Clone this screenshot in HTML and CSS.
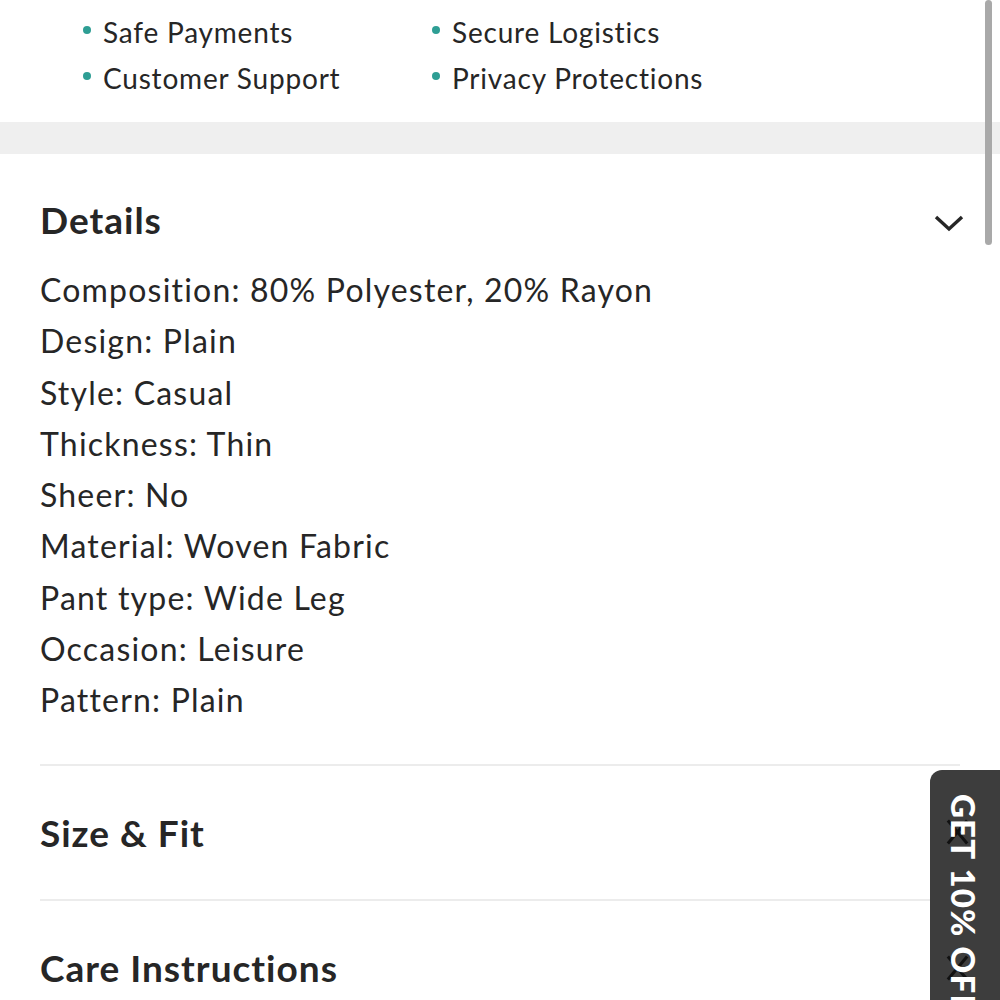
FILE: index.html
```html
<!DOCTYPE html>
<html>
<head>
<meta charset="utf-8">
<link rel="stylesheet" href="styles.css">
</head>
<body>
<div class="scrollbar"></div>
<section class="perks">
  <ul class="perk-list">
    <li><span class="dot"></span>Safe Payments</li>
    <li><span class="dot"></span>Secure Logistics</li>
    <li><span class="dot"></span>Customer Support</li>
    <li><span class="dot"></span>Privacy Protections</li>
  </ul>
</section>
<div class="band"></div>
<section class="accordion">
  <div class="item open">
    <div class="head">
      <h2>Details</h2>
      <svg class="chev" width="32" height="20" viewBox="0 0 32 20"><path d="M3 4 L16 16 L29 4" fill="none" stroke="#262626" stroke-width="3.4" stroke-linecap="butt"/></svg>
    </div>
    <div class="body">
      <p>Composition: 80% Polyester, 20% Rayon</p>
      <p>Design: Plain</p>
      <p>Style: Casual</p>
      <p>Thickness: Thin</p>
      <p>Sheer: No</p>
      <p>Material: Woven Fabric</p>
      <p>Pant type: Wide Leg</p>
      <p>Occasion: Leisure</p>
      <p>Pattern: Plain</p>
    </div>
  </div>
  <div class="item">
    <div class="head"><h2>Size &amp; Fit</h2></div>
  </div>
  <div class="item">
    <div class="head"><h2>Care Instructions</h2></div>
  </div>
</section>
<div class="promo">
  <span class="x x1"></span>
  <span class="x x2"></span>
  <span class="promo-text">GET 10% OFF</span>
</div>
</body>
</html>
```
FILE: styles.css
```css
html, body {
  margin: 0;
  padding: 0;
  background: #fff;
  overflow: hidden;
}
body {
  font-family: Lato, "Open Sans", sans-serif;
  color: #262626;
  width: 1000px;
  height: 1000px;
  position: relative;
}
.perks {
  height: 122px;
  padding: 0 0 0 82px;
  box-sizing: border-box;
}
.perk-list {
  list-style: none;
  margin: 0;
  padding: 9px 0 0 0;
  display: grid;
  grid-template-columns: 349px 1fr;
  row-gap: 0;
}
.perk-list li {
  font-size: 28px;
  line-height: 46px;
  letter-spacing: 0.8px;
  display: flex;
  align-items: center;
  color: #262626;
}
.dot {
  width: 8px;
  height: 8px;
  border-radius: 50%;
  background: #2e9e94;
  margin: 0 12px 4px 1px;
  flex: none;
}
.band {
  height: 32px;
  background: #efefef;
}
.accordion {
  padding: 0 40px;
}
.item {
  border-bottom: 2px solid #ececec;
}
.item:last-child {
  border-bottom: none;
}
.head {
  display: flex;
  justify-content: space-between;
  align-items: center;
  height: 133px;
}
.item.open .head {
  height: 130px;
}
.head h2 {
  margin: 0;
  font-size: 37px;
  font-weight: 700;
  letter-spacing: 1px;
  color: #262626;
}
.chev {
  margin-right: -5px;
  margin-top: 8px;
}
.body {
  margin-top: -20px;
  padding-bottom: 38px;
}
.body p {
  margin: 0;
  font-size: 32px;
  line-height: 51.3px;
  letter-spacing: 1.2px;
}
.scrollbar {
  position: absolute;
  top: 0;
  right: 8px;
  width: 7px;
  height: 245px;
  border-radius: 4px;
  background: #a9a9a9;
}
.promo {
  position: absolute;
  left: 930px;
  top: 770px;
  width: 70px;
  height: 230px;
  overflow: hidden;
  background: #3d3d3d;
  border-top-left-radius: 12px;
  display: flex;
  justify-content: center;
}
.promo-text {
  position: relative;
  writing-mode: vertical-rl;
  white-space: nowrap;
  font-size: 33px;
  font-weight: 900;
  color: #fff;
  padding-top: 24px;
  letter-spacing: 1.2px;
  margin-left: -2px;
}
.x {
  position: absolute;
  left: 17px;
  width: 20px;
  height: 28px;
}
.x::before, .x::after {
  content: "";
  position: absolute;
  left: 9px;
  top: 0;
  width: 3px;
  height: 30px;
  background: #111;
}
.x::before { transform: rotate(40deg); }
.x::after { transform: rotate(-40deg); }
.x1 { top: 47px; }
.x2 { top: 183px; }
```
